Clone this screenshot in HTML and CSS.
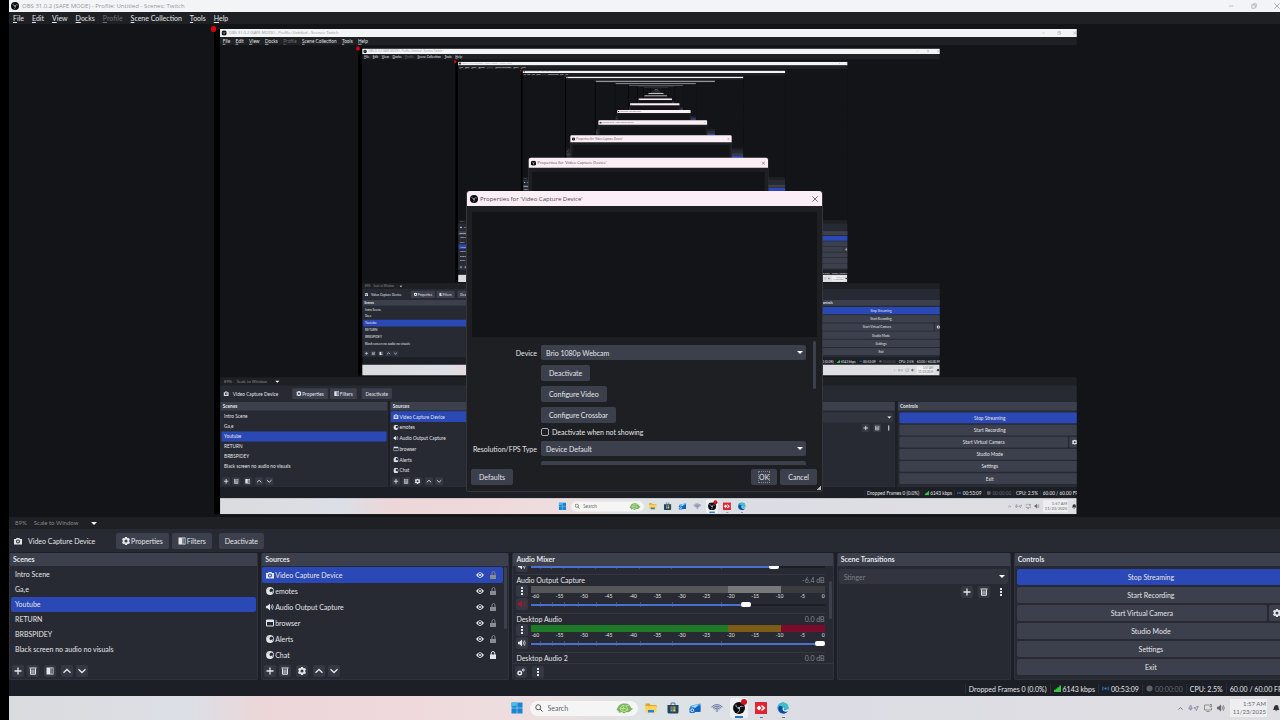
FILE: index.html
```html
<!DOCTYPE html>
<html lang="en">
<head>
  <meta charset="UTF-8" />
  <title>OBS 31.0.2 (SAFE MODE) - Profile: Untitled - Scenes: Twitch</title>
  <link rel="stylesheet" href="styles.css">
</head>
<body>
  <!-- icon sprite -->
  <svg class="sprite" aria-hidden="true">
    <symbol id="i-obs" viewBox="0 0 16 16"><circle cx="8" cy="8" r="8" fill="#0c0c0e"/><path d="M8 8C5 8 3.500 6 4 3.500M8 8c1.500-2.600 4-3 6-1.500M8 8c1.500 2.600.5 5-2 6" fill="none" stroke="#b8b8bc" stroke-width="1.200"/><circle cx="8" cy="8" r="1.600" fill="#b8b8bc"/></symbol>
    <symbol id="i-camera" viewBox="0 0 16 16"><path fill="currentColor" fill-rule="evenodd" d="M5 2h6l1 2h4v11H0V4h4zM8 5a4 4 0 1 0 0 8 4 4 0 0 0 0-8zm0 2a2 2 0 1 1 0 4 2 2 0 0 1 0-4z"/></symbol>
    <symbol id="i-gear" viewBox="0 0 16 16"><path fill="currentColor" fill-rule="evenodd" d="M6 0h4l.5 2 1.500.6L14 2l2 3-1.500 1.500.2 1.500-.2 1.500L16 11l-2 3-2-.6-1.500.6L10 16H6l-.5-2-1.500-.6L2 14l-2-3 1.500-1.500L1.300 8l.2-1.500L0 5l2-3 2 .6L5.500 2zM8 5a3 3 0 1 0 0 6 3 3 0 0 0 0-6z"/></symbol>
    <symbol id="i-filter" viewBox="0 0 16 16"><path fill="currentColor" fill-rule="evenodd" d="M1 1h14v14H1zM8 2.500v11h5.500v-11z"/><path fill="currentColor" opacity=".4" d="M8 2h4v12H8z"/></symbol>
    <symbol id="i-plus" viewBox="0 0 16 16"><path d="M8 1v14M1 8h14" stroke="currentColor" stroke-width="2.600"/></symbol>
    <symbol id="i-trash" viewBox="0 0 16 16"><path fill="none" stroke="currentColor" stroke-width="2" d="M1 2h14M3 3v11.500h10V3"/><path d="M5.800 5v8M8 5v8M10.200 5v8" stroke="currentColor" stroke-width="1.500"/></symbol>
    <symbol id="i-up" viewBox="0 0 16 16"><path fill="none" stroke="currentColor" stroke-width="2.600" d="M1 11.500 8 5l7 6.500"/></symbol>
    <symbol id="i-down" viewBox="0 0 16 16"><path fill="none" stroke="currentColor" stroke-width="2.600" d="M1 4.500 8 11l7-6.500"/></symbol>
    <symbol id="i-dots" viewBox="0 0 16 16"><path fill="currentColor" d="M6 0h4v4H6zM6 6h4v4H6zM6 12h4v4H6z"/></symbol>
    <symbol id="i-globe" viewBox="0 0 16 16"><circle cx="8" cy="8" r="7.800" fill="currentColor"/><path fill="#272a33" d="M8 4l3-1 3 2 .5 3-2.500 2-2-1-1 2-2-3zM12 11l2-1-2 3zM3 5l1-2 1 1z"/></symbol>
    <symbol id="i-speaker" viewBox="0 0 16 16"><path fill="currentColor" d="M0 5.500h3L8 1v14l-5-4.500H0z"/><path fill="none" stroke="currentColor" stroke-width="1.600" d="M10 4.500q2 3.500 0 7M12.500 2.500q4 5.500 0 11"/></symbol>
    <symbol id="i-window" viewBox="0 0 16 16"><path fill="currentColor" fill-rule="evenodd" d="M2 1h12q2 0 2 2v10q0 2-2 2H2q-2 0-2-2V3q0-2 2-2zm0 5v7h12V6z"/></symbol>
    <symbol id="i-eye" viewBox="0 0 16 16"><path fill="currentColor" fill-rule="evenodd" d="M0 8q8-11.500 16 0-8 11.500-16 0zm8-3.800a3.800 3.800 0 1 0 0 7.600 3.800 3.800 0 0 0 0-7.600z"/><circle cx="8" cy="8" r="2" fill="currentColor"/></symbol>
    <symbol id="i-unlock" viewBox="0 0 16 16"><path fill="currentColor" d="M2 8h12v8H2z"/><path fill="none" stroke="currentColor" stroke-width="1.800" d="M6 8V4.500Q6 1 9 1t3 3.500V8"/></symbol>
    <symbol id="i-lock" viewBox="0 0 16 16"><path fill="currentColor" d="M2 7h12v9H2z"/><path fill="none" stroke="currentColor" stroke-width="2" d="M4.500 8V5Q4.500 1 8 1t3.500 4v3"/></symbol>
    <symbol id="i-gears" viewBox="0 0 16 16"><circle cx="5.500" cy="10" r="3.500" fill="none" stroke="currentColor" stroke-width="3"/><circle cx="12.500" cy="4" r="2" fill="none" stroke="currentColor" stroke-width="2"/></symbol>
    <symbol id="i-close" viewBox="0 0 16 16"><path d="M1 1l14 14M15 1 1 15" stroke="currentColor" stroke-width="2"/></symbol>
    <symbol id="i-restore" viewBox="0 0 16 16"><path fill="none" stroke="currentColor" stroke-width="1.500" d="M2 5h9v9H2zM5 5V2h9v9h-3"/></symbol>
    <symbol id="i-min" viewBox="0 0 16 16"><path d="M2 8h12" stroke="currentColor" stroke-width="1.500"/></symbol>
    <symbol id="i-signal" viewBox="0 0 16 16"><path fill="#35c83c" d="M0 11h4v5H0zM4 8h4v8H4zM8 5h4v11H8zM12 1h4v15h-4z"/></symbol>
    <symbol id="i-live" viewBox="0 0 16 16"><circle cx="8" cy="8" r="2.500" fill="#3e8fe0"/><path fill="none" stroke="#2460ab" stroke-width="3" d="M3 4q-3 4 0 8M13 4q3 4 0 8"/></symbol>
    <symbol id="i-rec" viewBox="0 0 16 16"><circle cx="8" cy="8" r="7" fill="#5d6068"/></symbol>
    <symbol id="i-win" viewBox="0 0 24 24"><path fill="#1787d4" d="M1 1h10.500v10.500H1zM12.500 1H23v10.500H12.500zM1 12.500h10.500V23H1zM12.500 12.500H23V23H12.500z"/><path fill="#45bdf0" d="M1 1h10.500v6L1 9z"/></symbol>
    <symbol id="i-search" viewBox="0 0 16 16"><circle cx="6.500" cy="6.500" r="5" fill="none" stroke="#333" stroke-width="1.600"/><path d="M10.500 10.500 15 15" stroke="#333" stroke-width="1.800"/></symbol>
    <symbol id="i-turtle" viewBox="0 0 34 24"><path fill="#79b55c" d="M3 12Q7 2 17 3q10-1 13 9l4 1-4 4q-4 5-9 3l-5 3-5-3-5 2-1-4-4-2z"/><path fill="none" stroke="#c3e3a0" stroke-width="1.800" d="M8 13l5-6 7 1 4 7-6 4-7-1zM13 7l3 6 8 2M8 13l8 0-5 5M20 8l6-2"/></symbol>
    <symbol id="i-folder" viewBox="0 0 24 24"><path fill="#e2a323" d="M1 3h8l2 3h12v6H1z"/><path fill="#ffd45a" d="M1 8h22v13H1z"/><path fill="#2d7fd4" d="M6 16h12v5H6z"/></symbol>
    <symbol id="i-store" viewBox="0 0 24 24"><path fill="none" stroke="#3a7ab0" stroke-width="2" d="M8 6V2h8v4"/><path fill="#23425f" d="M1 6h22v14q0 3-3 3H4q-3 0-3-3z"/><path fill="#f0643c" d="M7 9h4.500v4.500H7z"/><path fill="#8bc34a" d="M12.500 9H17v4.500h-4.500z"/><path fill="#35b5ee" d="M7 14.500h4.500V19H7z"/><path fill="#ffc828" d="M12.500 14.500H17V19h-4.500z"/></symbol>
    <symbol id="i-outlook" viewBox="0 0 24 24"><path fill="#3aa0ec" d="M2 8 18 4l5-1v17H5z"/><path fill="#a9d6fa" d="M5 9l14-5-7 9z"/><path fill="#1560b8" d="M10 13l13-7v12q0 2-2 2H5z"/><rect x="1" y="11" width="11" height="11" rx="2" fill="#1b6fd0"/><circle cx="6.500" cy="16.500" r="2.800" fill="none" stroke="#fff" stroke-width="1.600"/></symbol>
    <symbol id="i-wave" viewBox="0 0 24 24"><path fill="#c4cadd" d="M1 10q11-10 22 0L12 21z"/><path fill="none" stroke="#69749f" stroke-width="1.800" d="M1 10q11-10 22 0M4 12q8-7 16 0M7 14q5-5 10 0M12 12v8"/></symbol>
    <symbol id="i-anydesk" viewBox="0 0 24 24"><rect width="24" height="24" rx="1" fill="#df2530"/><path fill="#fff" d="M3 12l5-5 5 5-5 5z"/><path fill="#fff" d="M12 8l2-2 7 6-7 6-2-2 4-4z"/></symbol>
    <symbol id="i-edge" viewBox="0 0 24 24"><circle cx="12" cy="12" r="11" fill="#1673c4"/><path fill="#3ac0c8" d="M1 12C2 3 9 0 14 1c6 1 9 6 9 10 0 5-5 6-8 4 2-6-8-8-14-3z"/><path fill="#0d4a98" d="M4 8c-3 8 4 15 10 15 3 0 6-2 8-5-6 3-13 0-12-6 0-4-4-5-6-4z"/><path fill="#e8eef5" d="M13 10q3 3 1 6 5 2 9-3l-1 5q-6 3-10-1-2-4 1-7z"/></symbol>
    <symbol id="i-mic" viewBox="0 0 30 16"><path fill="none" stroke="#5b628c" stroke-width="1.500" d="M5 2h4v7H5zM2 7q0 5 5 5t5-5M7 12v3M16 8l12-5-5 12-2-5z"/></symbol>
    <symbol id="i-screen" viewBox="0 0 16 16"><path fill="none" stroke="#666" stroke-width="1.300" d="M10 2H1v10h14V8M5 15h6M12 1v5h3V1z"/></symbol>
    <symbol id="i-bell" viewBox="0 0 16 16"><path fill="#333" d="M2 12Q4 9 4 6q1-4 5-4t4 4q0 4 2 6zM6 13h5q-2 3-5 0z"/></symbol>
  </svg>

  <div class="screen" id="screen">
    <div class="window">
      <header class="titlebar">
        <svg class="icon"><use href="#i-obs"/></svg>
        <span class="titlebar-text">OBS 31.0.2 (SAFE MODE) - Profile: Untitled - Scenes: Twitch</span>
        <div class="window-buttons">
          <button aria-label="Minimize"><svg class="icon"><use href="#i-min"/></svg></button>
          <button aria-label="Restore"><svg class="icon"><use href="#i-restore"/></svg></button>
          <button aria-label="Close"><svg class="icon"><use href="#i-close"/></svg></button>
        </div>
      </header>

      <nav class="menubar">
        <button><u>F</u>ile</button>
        <button><u>E</u>dit</button>
        <button><u>V</u>iew</button>
        <button><u>D</u>ocks</button>
        <button disabled><u>P</u>rofile</button>
        <button><u>S</u>cene Collection</button>
        <button><u>T</u>ools</button>
        <button><u>H</u>elp</button>
      </nav>

      <main class="preview">
        <div class="canvas"></div>
      </main>

      <div class="zoombar">
        <span>89%</span>
        <button>Scale to Window <i class="arrow"></i></button>
      </div>

      <div class="contextbar">
        <svg class="icon"><use href="#i-camera"/></svg>
        <span class="context-name">Video Capture Device</span>
        <button class="btn"><svg class="icon"><use href="#i-gear"/></svg>Properties</button>
        <button class="btn"><svg class="icon"><use href="#i-filter"/></svg>Filters</button>
        <button class="btn btn-last">Deactivate</button>
      </div>

      <div class="docks">
        <section class="dock">
          <h2>Scenes</h2>
          <ul class="scenes">
            <li>Intro Scene</li>
            <li>Ga,e</li>
            <li class="selected">Youtube</li>
            <li>RETURN</li>
            <li>BRBSPIDEY</li>
            <li>Black screen no audio no visuals</li>
          </ul>
          <div class="toolbar">
            <button aria-label="Add scene"><svg class="icon"><use href="#i-plus"/></svg></button>
            <button aria-label="Remove scene"><svg class="icon"><use href="#i-trash"/></svg></button>
            <button class="spaced" aria-label="Scene filters"><svg class="icon"><use href="#i-filter"/></svg></button>
            <button class="spaced" aria-label="Move scene up"><svg class="icon"><use href="#i-up"/></svg></button>
            <button aria-label="Move scene down"><svg class="icon"><use href="#i-down"/></svg></button>
          </div>
        </section>

        <section class="dock">
          <h2>Sources</h2>
          <div class="scroll">
            <ul class="sources">
              <li class="selected"><svg class="icon"><use href="#i-camera"/></svg><span>Video Capture Device</span><svg class="icon"><use href="#i-eye"/></svg><svg class="icon dim"><use href="#i-unlock"/></svg></li>
              <li><svg class="icon"><use href="#i-globe"/></svg><span>emotes</span><svg class="icon"><use href="#i-eye"/></svg><svg class="icon dim"><use href="#i-unlock"/></svg></li>
              <li><svg class="icon"><use href="#i-speaker"/></svg><span>Audio Output Capture</span><svg class="icon"><use href="#i-eye"/></svg><svg class="icon dim"><use href="#i-unlock"/></svg></li>
              <li><svg class="icon"><use href="#i-window"/></svg><span>browser</span><svg class="icon"><use href="#i-eye"/></svg><svg class="icon dim"><use href="#i-unlock"/></svg></li>
              <li><svg class="icon"><use href="#i-globe"/></svg><span>Alerts</span><svg class="icon"><use href="#i-eye"/></svg><svg class="icon dim"><use href="#i-unlock"/></svg></li>
              <li><svg class="icon"><use href="#i-globe"/></svg><span>Chat</span><svg class="icon"><use href="#i-eye"/></svg><svg class="icon"><use href="#i-lock"/></svg></li>
            </ul>
            <div class="scrollbar"><i class="thumb thumb-sources"></i></div>
          </div>
          <div class="toolbar">
            <button aria-label="Add source"><svg class="icon"><use href="#i-plus"/></svg></button>
            <button aria-label="Remove source"><svg class="icon"><use href="#i-trash"/></svg></button>
            <button class="spaced" aria-label="Source properties"><svg class="icon"><use href="#i-gear"/></svg></button>
            <button class="spaced" aria-label="Move source up"><svg class="icon"><use href="#i-up"/></svg></button>
            <button aria-label="Move source down"><svg class="icon"><use href="#i-down"/></svg></button>
          </div>
        </section>

        <section class="dock">
          <h2>Audio Mixer</h2>
          <div class="scroll">
            <div class="mixer">
              <div class="channel channel-top">
                <button class="mini" aria-label="Mute"><svg class="icon"><use href="#i-speaker"/></svg></button>
                <input type="range" aria-label="Volume" value="84" style="--level: 84%">
              </div>
              <div class="channel">
                <div class="channel-head"><span>Audio Output Capture</span><output>-6.4 dB</output></div>
                <div class="channel-body">
                  <div class="channel-buttons">
                    <button class="mini" aria-label="Options"><svg class="icon"><use href="#i-dots"/></svg></button>
                    <button class="mini muted" aria-label="Unmute"><svg class="icon"><use href="#i-speaker"/></svg></button>
                  </div>
                  <div class="channel-levels">
                    <div class="meter meter-muted"></div>
                    <div class="ticks"></div>
                    <input type="range" aria-label="Audio Output Capture volume" value="74" style="--level: 74%">
                  </div>
                </div>
              </div>
              <div class="channel">
                <div class="channel-head"><span>Desktop Audio</span><output>0.0 dB</output></div>
                <div class="channel-body">
                  <div class="channel-buttons">
                    <button class="mini" aria-label="Options"><svg class="icon"><use href="#i-dots"/></svg></button>
                    <button class="mini" aria-label="Mute"><svg class="icon"><use href="#i-speaker"/></svg></button>
                  </div>
                  <div class="channel-levels">
                    <div class="meter"></div>
                    <div class="ticks"></div>
                    <input type="range" aria-label="Desktop Audio volume" value="100" style="--level: 100%">
                  </div>
                </div>
              </div>
              <div class="channel">
                <div class="channel-head"><span>Desktop Audio 2</span><output>0.0 dB</output></div>
                <div class="channel-body">
                  <div class="channel-buttons"></div>
                  <div class="channel-levels"><div class="meter"></div></div>
                </div>
              </div>
            </div>
            <div class="scrollbar"><i class="thumb thumb-mixer"></i></div>
          </div>
          <div class="toolbar toolbar-line">
            <button aria-label="Advanced audio properties"><svg class="icon"><use href="#i-gears"/></svg></button>
            <button class="spaced" aria-label="Mixer menu"><svg class="icon"><use href="#i-dots"/></svg></button>
          </div>
        </section>

        <section class="dock">
          <h2>Scene Transitions</h2>
          <div class="transitions">
            <div class="select"><select aria-label="Transition" disabled><option>Stinger</option></select><i class="arrow"></i></div>
            <div class="toolbar toolbar-right">
              <button aria-label="Add transition"><svg class="icon"><use href="#i-plus"/></svg></button>
              <button aria-label="Remove transition"><svg class="icon"><use href="#i-trash"/></svg></button>
              <button class="flat" aria-label="Transition menu"><svg class="icon"><use href="#i-dots"/></svg></button>
            </div>
          </div>
        </section>

        <section class="dock">
          <h2>Controls</h2>
          <div class="controls">
            <button class="btn primary">Stop Streaming</button>
            <button class="btn">Start Recording</button>
            <div class="controls-row">
              <button class="btn">Start Virtual Camera</button>
              <button class="btn btn-gear" aria-label="Virtual camera settings"><svg class="icon"><use href="#i-gear"/></svg></button>
            </div>
            <button class="btn">Studio Mode</button>
            <button class="btn">Settings</button>
            <button class="btn">Exit</button>
          </div>
        </section>
      </div>

      <footer class="statusbar">
        <span>Dropped Frames 0 (0.0%)</span>
        <span><svg class="icon"><use href="#i-signal"/></svg>6143 kbps</span>
        <span><svg class="icon"><use href="#i-live"/></svg>00:53:09</span>
        <span class="off"><svg class="icon"><use href="#i-rec"/></svg>00:00:00</span>
        <span>CPU: 2.5%</span>
        <span>60.00 / 60.00 FPS</span>
      </footer>
    </div>

    <div class="taskbar">
      <div class="apps">
        <button class="app" aria-label="Start"><svg><use href="#i-win"/></svg></button>
        <label class="search">
          <svg class="icon"><use href="#i-search"/></svg>
          <input type="text" placeholder="Search" aria-label="Search">
          <svg class="turtle"><use href="#i-turtle"/></svg>
        </label>
        <button class="app" aria-label="File Explorer"><svg><use href="#i-folder"/></svg></button>
        <button class="app" aria-label="Store"><svg><use href="#i-store"/></svg></button>
        <button class="app" aria-label="Outlook"><svg><use href="#i-outlook"/></svg></button>
        <button class="app" aria-label="Audio"><svg><use href="#i-wave"/></svg></button>
        <button class="app active" aria-label="OBS Studio"><svg><use href="#i-obs"/></svg><i class="badge"></i></button>
        <button class="app running" aria-label="AnyDesk"><svg><use href="#i-anydesk"/></svg></button>
        <button class="app running" aria-label="Edge"><svg><use href="#i-edge"/></svg></button>
      </div>
      <div class="tray">
        <svg class="icon small"><use href="#i-up"/></svg>
        <svg class="icon wide"><use href="#i-mic"/></svg>
        <svg class="icon"><use href="#i-screen"/></svg>
        <svg class="icon"><use href="#i-speaker"/></svg>
        <div class="clock"><time>1:57 AM</time><time>11/23/2025</time></div>
        <svg class="icon"><use href="#i-bell"/></svg>
      </div>
    </div>

    <div class="dialog" role="dialog" aria-label="Properties for 'Video Capture Device'">
      <header class="dialog-title">
        <svg class="icon"><use href="#i-obs"/></svg>
        <span>Properties for 'Video Capture Device'</span>
        <button aria-label="Close"><svg class="icon"><use href="#i-close"/></svg></button>
      </header>
      <div class="dialog-preview"></div>
      <div class="dialog-scroll">
        <form class="properties">
          <label for="device">Device</label>
          <div class="select"><select id="device"><option>Brio 1080p Webcam</option></select><i class="arrow"></i></div>
          <button type="button" class="btn">Deactivate</button>
          <button type="button" class="btn">Configure Video</button>
          <button type="button" class="btn">Configure Crossbar</button>
          <label class="check"><input type="checkbox">Deactivate when not showing</label>
          <label for="resType">Resolution/FPS Type</label>
          <div class="select"><select id="resType"><option>Device Default</option></select><i class="arrow"></i></div>
          <div class="select next"></div>
        </form>
        <div class="scrollbar"><i class="thumb thumb-dialog"></i></div>
      </div>
      <div class="dialog-footer">
        <button class="btn">Defaults</button>
        <button class="btn ok"><span>OK</span></button>
        <button class="btn">Cancel</button>
      </div>
      <i class="grip"></i>
    </div>
  </div>

  <script src="script.js"></script>
</body>
</html>
```

FILE: styles.css
```css
* { box-sizing: border-box; }
body {
  margin: 0;
  background: #000;
  overflow: hidden;
  font-family: Lato, "Open Sans", sans-serif;
  font-size: 7px;
  line-height: 10px;
  color: #e4e5e8;
}
button, input, select {
  font: inherit;
  color: inherit;
  margin: 0;
  padding: 0;
  border: none;
  background: none;
}
h2, ul { margin: 0; padding: 0; list-style: none; }
.sprite { position: absolute; width: 0; height: 0; }
.icon { display: block; width: 8px; height: 8px; flex: none; }

.screen {
  position: relative;
  width: 100vw;
  height: 100vh;
  overflow: hidden;
  background: #000;
  display: flex;
  flex-direction: column;
}
/* the main window hangs over the right edge of the desktop */
.window {
  flex: 1;
  min-height: 0;
  width: 100%;
  margin-left: 9px;
  display: flex;
  flex-direction: column;
  background: #1d1f26;
}
.titlebar {
  height: 12px;
  display: flex;
  align-items: center;
  padding: 0 9px 0 2px;
  gap: 3px;
  background: #f3f4f6;
  color: #96979b;
  font-family: "Open Sans", sans-serif;
}
.titlebar-text { flex: 1; font-size: 6px; }
.window-buttons { display: flex; gap: 17px; }
.window-buttons .icon { width: 6px; height: 6px; }
.menubar {
  height: 12px;
  display: flex;
  align-items: center;
  gap: 8px;
  padding: 0 4px;
  background: #1e2024;
}
.menubar button:disabled { color: #6a6c72; }

.preview {
  flex: 1;
  min-height: 0;
  display: flex;
  align-items: center;
  justify-content: center;
  padding: 2px 8px 0 0;
  background: #131418;
  overflow: hidden;
}
.canvas {
  position: relative;
  flex: none;
  width: 67.4vw;
  height: 67.4vh;
  background: #131418;
  border-right: 1px dashed #2c2e33;
}
.canvas .screen {
  transform: scale(.674);
  transform-origin: 0 0;
}
/* corner handle of the selected source */
.canvas::after {
  content: "";
  position: absolute;
  left: -3px;
  top: -3px;
  width: 5px;
  height: 6px;
  border-radius: 2px;
  background: #d9040f;
}

.zoombar {
  height: 12px;
  display: flex;
  align-items: center;
  gap: 7px;
  padding-left: 6px;
  background: #1e2024;
  color: #85878d;
  font-size: 6px;
}
.zoombar button { display: flex; align-items: center; gap: 13px; }
.arrow {
  width: 0;
  height: 0;
  border: 3px solid transparent;
  border-top: 3px solid #fff;
  border-bottom: 0;
}
.contextbar {
  height: 23px;
  display: flex;
  align-items: center;
  gap: 3px;
  padding-left: 5px;
  background: #272a33;
}
.context-name { width: 88px; padding-left: 3px; }
.btn {
  height: 16px;
  display: flex;
  align-items: center;
  justify-content: center;
  gap: 1px;
  padding: 0 8px;
  border-radius: 2px;
  background: #3c404d;
  white-space: nowrap;
}
.contextbar .btn { padding: 0 6px; }
.btn-last { margin-left: 4px; }

.docks {
  height: 129px;
  display: grid;
  grid-template-columns: 249fr 248fr 321fr 174fr 275fr;
  gap: 3px;
  padding: 1px 0;
}
.dock {
  min-width: 0;
  min-height: 0;
  display: flex;
  flex-direction: column;
  background: #272a33;
  border: 1px solid #30333d;
  border-top: none;
  border-radius: 2px;
}
.dock h2 {
  height: 13px;
  padding-left: 3px;
  font-size: 7px;
  line-height: 13px;
  background: #3c404d;
}
.scenes { flex: 1; padding: 1px 1px 0; }
.scenes li { height: 15px; line-height: 15px; padding-left: 4px; border-radius: 2px; }
.scenes .selected, .sources .selected { background: #2a48b6; }
.scroll { flex: 1; min-height: 0; display: flex; overflow: hidden; }
.sources { flex: 1; padding-top: 1px; }
.sources li {
  height: 16px;
  display: flex;
  align-items: center;
  padding: 0 6px 0 4px;
  gap: 1px;
  border-radius: 2px;
}
.sources span { flex: 1; }
.sources .icon + .icon { margin-left: 4px; }
.dim { color: #8a8c92; }
.scrollbar { width: 5px; padding: 1px 1px 0; }
.thumb { display: block; border-radius: 2px; background: #3c404d; }
.thumb-sources { height: 62px; }
.thumb-mixer { height: 38px; margin-top: 14px; }
.thumb-dialog { height: 48px; }
.toolbar { height: 16px; display: flex; gap: 3px; padding: 2px; }
.toolbar button, .mini {
  width: 12px;
  height: 12px;
  display: flex;
  align-items: center;
  justify-content: center;
  border-radius: 2px;
  background: #343843;
}
.toolbar .spaced { margin-left: 2px; }
.toolbar .flat { background: none; }
.toolbar-line { border-top: 1px solid #343741; }

.mixer { flex: 1; min-width: 0; padding: 0 3px; overflow: hidden; }
.channel { height: 39px; border-bottom: 1px solid #343741; }
.channel-top { height: 9px; display: flex; gap: 3px; align-items: flex-start; }
.channel-top .mini { margin-top: -6px; }
.channel-head { display: flex; justify-content: space-between; }
.channel-head output { color: #85878d; }
.channel-body { display: flex; gap: 3px; }
.channel-buttons { width: 12px; display: flex; flex-direction: column; gap: 1px; }
.channel-levels { flex: 1; min-width: 0; padding-top: 1px; }
.muted { color: #a5162b; }
.meter {
  height: 7px;
  background: linear-gradient(90deg, #1f7a27 67%, #7c5b15 67% 85%, #7a0b2b 85%);
}
.meter-muted {
  background: linear-gradient(90deg, #555657 67%, #777879 67% 85%, #3b3c3f 85%);
}
.ticks {
  height: 7px;
  display: flex;
  justify-content: space-between;
  font-size: 5px;
  line-height: 7px;
}
input[type="range"] {
  --mark: linear-gradient(#434a62, #434a62);
  display: block;
  appearance: none;
  width: 100%;
  height: 5px;
  margin-top: 2px;
  background: linear-gradient(#4a6fd0, #4a6fd0) 0 2px / var(--level) 2px no-repeat,
    linear-gradient(#1c1e24, #1c1e24) 0 2px / 100% 2px no-repeat,
    var(--mark) 3% 0 / 1px 100% no-repeat,
    var(--mark) 7% 0 / 1px 100% no-repeat,
    var(--mark) 11% 0 / 1px 100% no-repeat,
    var(--mark) 16% 0 / 1px 100% no-repeat,
    var(--mark) 22% 0 / 1px 100% no-repeat,
    var(--mark) 29% 0 / 1px 100% no-repeat,
    var(--mark) 37% 0 / 1px 100% no-repeat,
    var(--mark) 48% 0 / 1px 100% no-repeat,
    var(--mark) 65% 0 / 1px 100% no-repeat;
}
input[type="range"]::-webkit-slider-thumb {
  appearance: none;
  width: 10px;
  height: 5px;
  border-radius: 2px;
  background: #fff;
}
.channel-top input[type="range"] { margin-top: -2px; }

.transitions { padding: 3px 2px 0 1px; }
.select {
  height: 15px;
  display: flex;
  align-items: center;
  padding-right: 3px;
  border-radius: 2px;
  background: #3c404d;
}
.select select { flex: 1; height: 100%; padding-left: 5px; appearance: none; }
.select select:disabled { color: #7c7e86; opacity: 1; }
.transitions .select { background: #32353f; }
.toolbar-right { justify-content: flex-end; gap: 5px; padding: 2px 1px; }

.controls { display: flex; flex-direction: column; gap: 2px; padding: 3px 3px 0 2px; }
.controls-row { display: flex; gap: 2px; }
.controls-row .btn:first-child { flex: 1; }
.primary { background: #2a48b6; }
.controls-row .btn-gear { width: 16px; padding: 0; }

.statusbar {
  height: 15px;
  display: flex;
  align-items: center;
  justify-content: flex-end;
}
.statusbar span {
  display: flex;
  align-items: center;
  gap: 2px;
  padding: 0 3px;
  border-left: 1px solid #2c2f37;
}
.statusbar .off { color: #676a71; }
.statusbar .icon { width: 7px; height: 7px; }

.taskbar {
  height: 24px;
  margin-left: 9px;
  display: grid;
  grid-template-columns: 1fr auto 1fr;
  background: linear-gradient(90deg, #dadbdd, #dcdfe6 14%, #ecd6d8 20%, #efd9dc 32%, #ecdfe0 42%, #dde3e4 50%, #dcdce4 65%, #dfdfe2);
}
.apps { grid-column: 2; display: flex; align-items: center; gap: 4px; padding-left: 10px; }
.app {
  position: relative;
  width: 18px;
  height: 20px;
  display: flex;
  align-items: center;
  justify-content: center;
  border-radius: 2px;
}
.app svg { width: 12px; height: 12px; }
.active { background: #eff0f4; }
.active::after, .running::after {
  content: "";
  position: absolute;
  bottom: 0;
  left: 8px;
  width: 3px;
  height: 1px;
  background: #77787c;
}
.active::after { left: 5px; width: 8px; height: 2px; background: #2a76c8; }
.badge {
  position: absolute;
  top: 1px;
  right: 1px;
  width: 6px;
  height: 6px;
  border-radius: 50%;
  background: #d5101c;
}
.search {
  width: 108px;
  height: 15px;
  display: flex;
  align-items: center;
  gap: 5px;
  padding: 0 5px;
  border-radius: 8px;
  background: #f6f5f5;
}
.search input { flex: 1; min-width: 0; }
.search input::placeholder { color: #66676a; opacity: 1; }
.turtle { width: 17px; height: 12px; }
.tray {
  justify-self: end;
  display: flex;
  align-items: center;
  gap: 5px;
  color: #66686d;
}
.tray .small { width: 5px; height: 5px; }
.tray .wide { width: 11px; }
.clock {
  height: 18px;
  display: flex;
  flex-direction: column;
  justify-content: center;
  padding: 0 1px 0 3px;
  background: #eeeef0;
  font-size: 6px;
  line-height: 8px;
  text-align: right;
}

.dialog {
  position: absolute;
  left: 466px;
  top: 191px;
  width: 357px;
  border: 1px solid #34363c;
  border-top: none;
  border-radius: 3px;
  background: #1d1f23;
}
.dialog-title {
  height: 15px;
  display: flex;
  align-items: center;
  gap: 2px;
  padding: 0 4px 0 3px;
  border-radius: 3px 3px 0 0;
  background: #fbeff5;
  color: #4c484c;
  font-family: "Open Sans", sans-serif;
  font-size: 6px;
}
.dialog-title span { flex: 1; }
.dialog-title button .icon { width: 6px; height: 6px; }
.dialog-preview { height: 125px; margin: 6px 5px 3px; background: #131417; }
.dialog-scroll { height: 125px; display: flex; margin: 0 5px; overflow: hidden; }
.properties {
  flex: 1;
  display: grid;
  grid-template-columns: 65px 1fr;
  grid-auto-rows: max-content;
  align-items: center;
  gap: 5px 4px;
  padding: 5px 6px 0 0;
}
.properties label { text-align: right; white-space: nowrap; }
.properties .btn, .properties .check, .properties .next { grid-column: 2; justify-self: start; }
.properties .next { width: 100%; }
.check { height: 8px; display: flex; align-items: center; gap: 3px; }
.check input {
  appearance: none;
  width: 8px;
  height: 8px;
  border: 1px solid #a6a8ae;
  border-radius: 2px;
}
.dialog-footer { display: flex; gap: 3px; padding: 4px 5px 6px 4px; }
.ok { margin-left: auto; }
.ok span { outline: 1px dotted #80838c; }
.grip {
  position: absolute;
  right: 1px;
  bottom: 1px;
  width: 4px;
  height: 4px;
  background: linear-gradient(135deg, transparent 50%, #b0b2b6 50%);
}
```

FILE: script.js
```js
const DEPTH = 12;
const TEXT_DEPTH = 4; // below this the letters are smaller than a pixel
const screenEl = document.getElementById('screen');

// dB scale under every meter
document.querySelectorAll('.ticks').forEach(ticks => {
  for (let db = -60; db <= 0; db += 5) {
    const tick = document.createElement('span');
    tick.textContent = db;
    ticks.appendChild(tick);
  }
});

function removeText(root) {
  const walker = document.createTreeWalker(root, NodeFilter.SHOW_TEXT);
  const nodes = [];
  while (walker.nextNode()) nodes.push(walker.currentNode);
  nodes.forEach(node => node.remove());
  root.querySelectorAll('[placeholder]').forEach(el => el.removeAttribute('placeholder'));
}

// The captured display shows this same desktop, so nest copies in the canvas
const template = screenEl.cloneNode(true);
template.removeAttribute('id');
template.querySelectorAll('[id]').forEach(el => el.removeAttribute('id'));
template.querySelectorAll('[for]').forEach(el => el.removeAttribute('for'));
template.setAttribute('aria-hidden', 'true');
template.inert = true;

let canvas = screenEl.querySelector('.canvas');
for (let i = 0; i < DEPTH; i++) {
  const copy = template.cloneNode(true);
  if (i >= TEXT_DEPTH) removeText(copy);
  canvas.appendChild(copy);
  canvas = copy.querySelector('.canvas');
}
```
